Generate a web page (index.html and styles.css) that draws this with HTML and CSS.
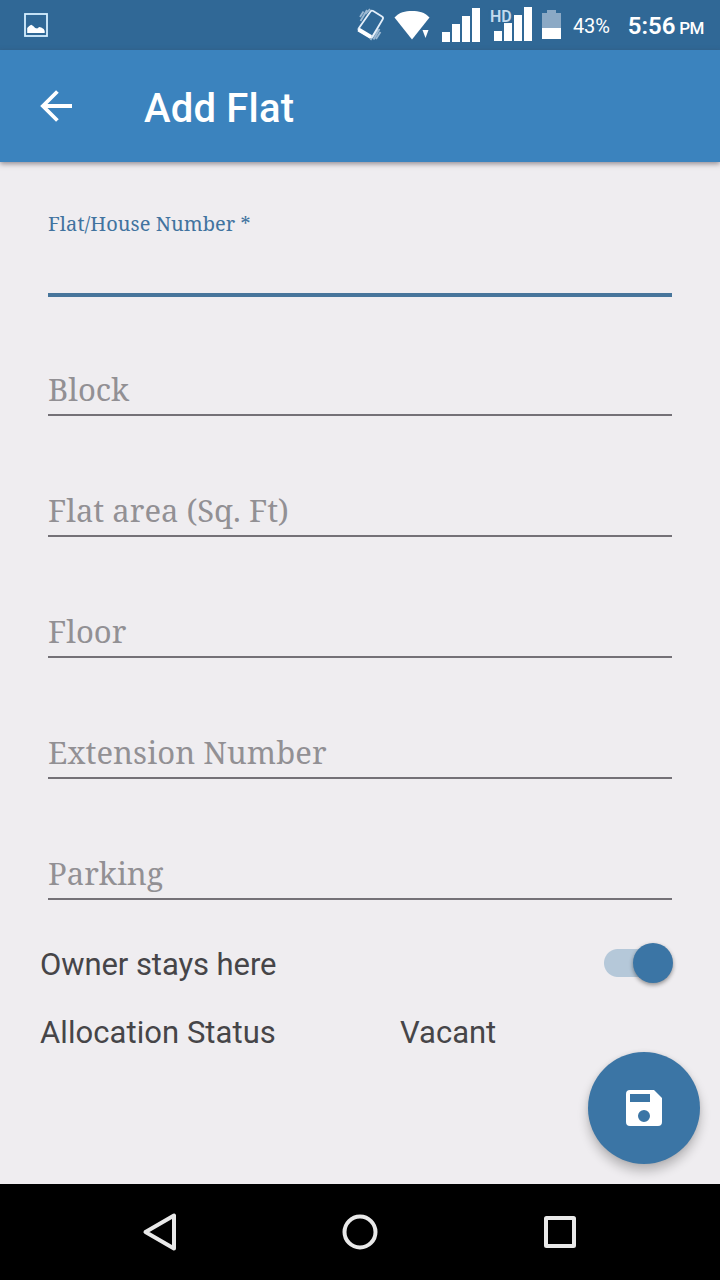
FILE: index.html
```html
<!DOCTYPE html>
<html lang="en">
<head>
<meta charset="utf-8">
<title>Add Flat</title>
<link rel="stylesheet" href="styles.css">
</head>
<body>
<div class="screen">
  <header class="status-bar">
    <svg class="icon-picture" width="24" height="24" viewBox="0 0 24 24"><rect x="1" y="1" width="22" height="22" fill="none" stroke="#d5efff" stroke-width="1.8"/><path fill="#fff" d="M3.200 20v-5l2-2 2-1.300 2 1.300 2 2 2 .5 2-1.500 2 .5 2.500 1.500 1 2v2z"/></svg>
    <svg class="icon-rotate" width="30" height="36" viewBox="0 0 30 36"><g fill="none" stroke="#e4effa"><path d="M14.500 4.500Q15.500 3 17.200 4L26 9.500Q27.700 10.600 26.700 12.200L16.500 29.500Q15.600 31 13.900 30L3.500 23.900Q1.900 22.900 2.800 21.300Z" stroke-width="1.800"/><path d="M2.500 22.500L15 30" stroke="#fff" stroke-width="4"/><path d="M11 3L4.500 14M14 2L9.500 7M7.500 4.500L4 10M23.500 22L17.500 32.500M21.500 22L14.500 33M24.500 25L20 32" stroke-width="1.800" opacity=".6"/></g></svg>
    <svg class="icon-wifi" width="36" height="30" viewBox="0 0 36 30"><path fill="#fff" d="M.5 6.500C5.500 1.200 11 0 18 0s12.500 1.200 17.500 6.500L18 28.500z"/><path fill="#306896" d="M27 18.500h9v11h-9z"/><path fill="#fff" d="M28.500 19h6l-3 8z"/></svg>
    <svg class="icon-signal" width="38" height="34" viewBox="0 0 38 34"><path fill="#fff" d="M0 24h8v10H0zM10 16h8v18h-8zM20 8h8v26h-8zM30 0h8v34h-8z"/></svg>
    <span class="signal-hd">
      <svg width="38" height="34" viewBox="0 0 38 34"><path fill="#fff" d="M0 24h8v10H0zM10 16h8v18h-8zM20 8h8v26h-8zM30 0h8v34h-8z"/></svg>
      <span class="hd">HD</span>
    </span>
    <svg class="icon-battery" width="19" height="29" viewBox="0 0 19 29"><path fill="#8ba9c5" d="M5 0h9v3h5v15H0V3h5z"/><path fill="#fff" d="M0 18h19v11H0z"/></svg>
    <span class="percent">43%</span>
    <span class="clock">5:56 <span class="meridiem">PM</span></span>
  </header>

  <div class="app-bar">
    <svg class="back" width="32" height="32" viewBox="0 0 32 32"><path d="M32 16H3M17.400 1.500L2.900 16l14.500 14.500" fill="none" stroke="#fff" stroke-width="3.800"/></svg>
    <h1 class="title">Add Flat</h1>
  </div>

  <main class="content">
    <div class="fields">
      <div class="field focused"><span class="label">Flat/House Number *</span></div>
      <div class="field first"><span class="label">Block</span></div>
      <div class="field"><span class="label">Flat area (Sq. Ft)</span></div>
      <div class="field"><span class="label">Floor</span></div>
      <div class="field"><span class="label extension">Extension Number</span></div>
      <div class="field"><span class="label">Parking</span></div>
    </div>
    <div class="row owner">
      <span class="caption">Owner stays here</span>
      <span class="switch"><span class="thumb"></span></span>
    </div>
    <div class="row status">
      <span class="name">Allocation Status</span>
      <span class="value">Vacant</span>
    </div>
    <div class="fab">
      <svg width="36" height="36" viewBox="0 0 36 36"><path fill="#fff" fill-rule="evenodd" d="M4 0H28L36 8V32a4 4 0 0 1-4 4H4a4 4 0 0 1-4-4V4a4 4 0 0 1 4-4zM4 4v8h20V4zM18 20a6 6 0 1 0 0 12 6 6 0 0 0 0-12z"/></svg>
    </div>
  </main>

  <nav class="nav-bar">
    <svg width="40" height="40" viewBox="0 0 40 40"><path d="M34 3.500v33L5.500 20z"/></svg>
    <svg width="40" height="40" viewBox="0 0 40 40"><circle cx="20" cy="20" r="15.500"/></svg>
    <svg width="40" height="40" viewBox="0 0 40 40"><rect x="6" y="6" width="28" height="28" rx=".5"/></svg>
  </nav>
</div>
</body>
</html>
```
FILE: styles.css
```css
* { box-sizing: border-box; }
body { margin: 0; }
.screen {
  width: 720px;
  height: 1280px;
  display: flex;
  flex-direction: column;
  overflow: hidden;
  background: #efedf0;
  font-family: Roboto, sans-serif;
  white-space: nowrap;
}
svg { display: block; flex: none; }

.status-bar {
  height: 50px;
  flex: none;
  display: flex;
  align-items: flex-start;
  background: #306896;
  color: #fff;
}
.icon-picture { margin: 13px 0 0 24px; }
.icon-rotate { margin: 7px 0 0 308px; }
.icon-wifi { margin: 11px 0 0 8px; }
.icon-signal { margin: 8px 0 0 12px; }
.signal-hd { position: relative; margin: 7px 0 0 14px; }
.hd {
  position: absolute;
  left: -4px;
  top: 2px;
  font-size: 16px;
  line-height: 16px;
  font-weight: 600;
  color: #c3daee;
  text-shadow: 0 0 2px #306896, 1px 0 1px #306896;
}
.icon-battery { margin: 10px 0 0 10px; }
.percent { margin: 14px 0 0 12px; font-size: 20px; line-height: 24px; letter-spacing: -.15px; }
.clock { margin: 11px 0 0 18px; font-size: 24px; line-height: 30px; font-weight: 600; }
.meridiem { font-size: 17px; font-weight: 500; margin-left: -2px; letter-spacing: -.6px; }

.app-bar {
  height: 112px;
  flex: none;
  display: flex;
  align-items: center;
  padding-left: 40px;
  background: #3b83be;
  color: #fff;
  box-shadow: 0 2px 5px rgba(60, 50, 60, .5);
  z-index: 1;
}
.title { margin: 6px 0 0 72px; font-size: 40px; line-height: 48px; font-weight: 500; letter-spacing: .2px; }

.content { position: relative; flex: 1; }
.fields { padding: 0 48px; }
.field {
  height: 121px;
  display: flex;
  align-items: flex-end;
  padding-bottom: 5px;
  border-bottom: 2px solid #747177;
  color: #929094;
  font-family: "Noto Serif", "DejaVu Serif Condensed", "DejaVu Serif", serif;
  font-size: 31px;
  line-height: 40px;
}
.first { height: 119px; }
.extension { letter-spacing: .08px; }
.focused {
  height: 135px;
  padding-bottom: 56px;
  border-bottom: 4px solid #47759b;
  color: #41739f;
  font-size: 20px;
  line-height: 26px;
  letter-spacing: .05px;
}

.row { display: flex; align-items: center; padding-left: 40px; font-size: 31px; line-height: 40px; color: #464548; }
.owner { justify-content: space-between; align-items: flex-start; height: 42px; padding-right: 47px; margin-top: 43px; }
.caption { padding-top: 2px; letter-spacing: -.08px; }
.switch {
  width: 69px;
  height: 40px;
  display: flex;
  align-items: center;
  justify-content: flex-end;
  background: linear-gradient(#b5c8d9, #b5c8d9) 14px 6px / 40px 28px no-repeat, radial-gradient(circle at 14px 20px, #b5c8d9 13.500px, transparent 14.500px);
}
.thumb { width: 40px; height: 40px; border-radius: 50%; background: #3b75a5; box-shadow: 0 2px 4px rgba(0, 0, 0, .4); }
.status { margin-top: 28px; }
.name { width: 360px; letter-spacing: .06px; }
.fab {
  position: absolute;
  right: 20px;
  bottom: 20px;
  width: 112px;
  height: 112px;
  border-radius: 50%;
  display: flex;
  align-items: center;
  justify-content: center;
  background: #3b75a5;
  box-shadow: 0 7px 11px rgba(0, 0, 0, .24), 0 0 4px rgba(0, 0, 0, .08);
}

.nav-bar {
  height: 96px;
  flex: none;
  display: flex;
  align-items: center;
  justify-content: center;
  gap: 160px;
  background: #000;
}
.nav-bar svg { fill: none; stroke: #e9e9e9; stroke-width: 4; stroke-linejoin: round; }
```
